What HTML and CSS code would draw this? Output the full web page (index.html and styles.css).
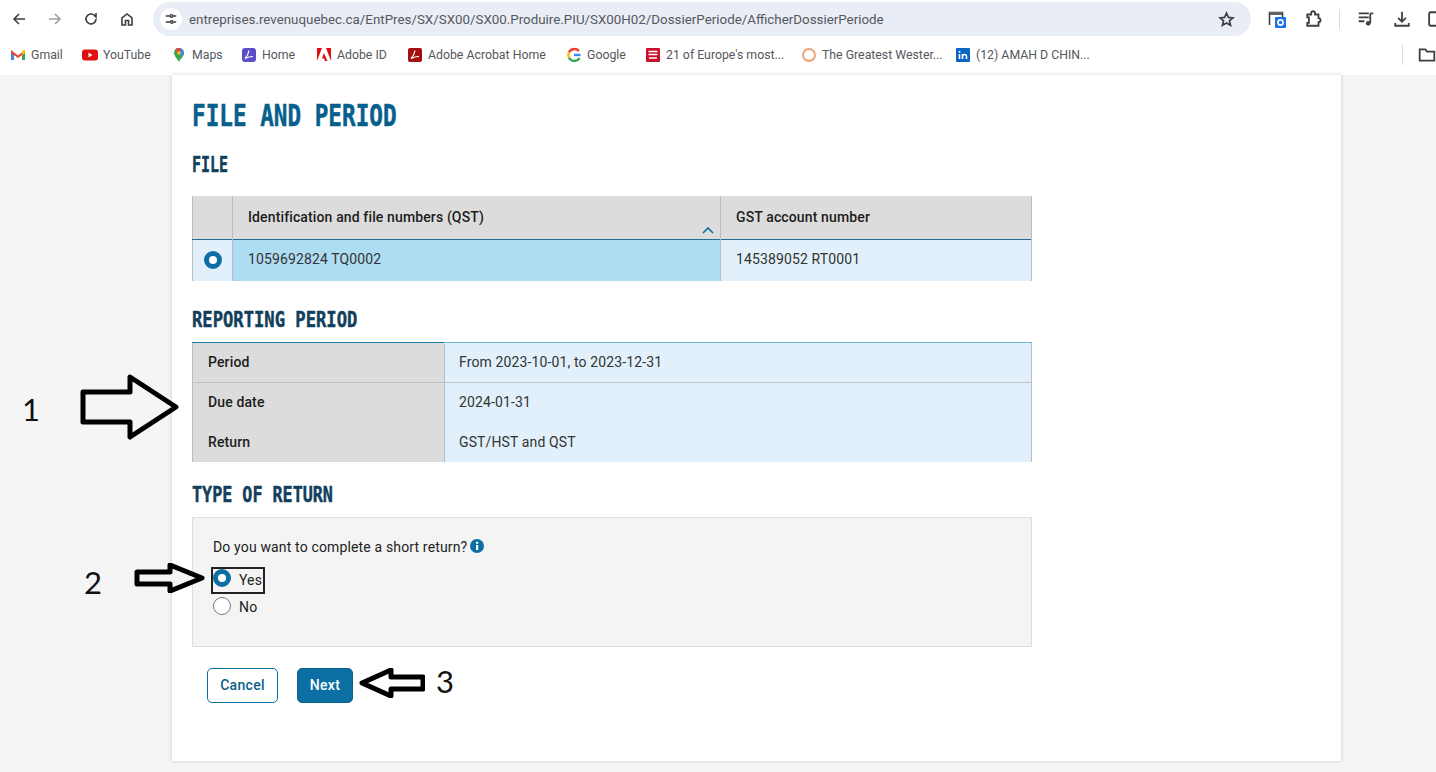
FILE: index.html
```html
<!DOCTYPE html>
<html lang="en">
<head>
<meta charset="utf-8">
<title>File and period</title>
<link rel="stylesheet" href="styles.css">
</head>
<body>
<header class="toolbar">
  <svg class="tb-icon first" viewBox="0 0 16 16"><path d="M14 8H3M8 3 3 8l5 5" class="st dark"/></svg>
  <svg class="tb-icon muted" viewBox="0 0 16 16"><path d="M2 8h11M8 3l5 5-5 5" class="st grey"/></svg>
  <svg class="tb-icon" viewBox="0 0 16 16"><path d="M13 8a5 5 0 1 1-1.500-3.600L13 6V2" class="st dark"/></svg>
  <svg class="tb-icon" viewBox="0 0 16 16"><path d="M3 14V7l5-4 5 4v7h-3.500V9.500h-3V14z" class="st dark"/></svg>
  <div class="omnibox">
    <span class="tune"><svg viewBox="0 0 16 16"><path d="M2 4.500h5M11 11.500h3M2 11.500h5M10 4.500h4" class="st dark"/><circle cx="8.500" cy="4.500" r="1.500" class="st dark"/><circle cx="9" cy="11.500" r="1.500" class="st dark"/></svg></span>
    <span class="url">entreprises.revenuquebec.ca/EntPres/SX/SX00/SX00.Produire.PIU/SX00H02/DossierPeriode/AfficherDossierPeriode</span>
    <svg class="star" viewBox="0 0 16 16"><path d="m8 2 1.800 4 4.200.4-3.200 2.800 1 4.300L8 11.200 4.200 13.500l1-4.300L2 6.400 6.200 6z" class="st dark"/></svg>
  </div>
  <svg class="ext camera" viewBox="0 0 18 18"><path d="M1.500 15V2.500h13V8" class="st dark"/><path d="M1.500 2h13v3h-13z" fill="#5f6368"/><rect x="7" y="7" width="11" height="11" rx="1" fill="#1a73e8"/><circle cx="12.500" cy="12.500" r="2.600" fill="none" stroke="#fff" stroke-width="1.600"/></svg>
  <svg class="ext puzzle" viewBox="0 0 16 16"><path d="M2 4h3.500V2.800a1.700 1.700 0 0 1 3.400 0V4H12v3.200a1.800 1.800 0 0 1 0 3.600V14H2v-2.500h1.500V6.500H2z" class="st dark"/></svg>
  <span class="divider"></span>
  <svg class="ext queue" viewBox="0 0 16 16"><path d="M1.500 3h9M1.500 6.500h9M1.500 10h5" class="st dark"/><path d="M11.800 3h2.700M11.800 3v8.500" class="st dark"/><circle cx="10" cy="11.800" r="2.100" fill="#3c4043"/></svg>
  <svg class="ext download" viewBox="0 0 16 16"><path d="M8 1.500v9M4.500 7 8 10.500 11.500 7M2 11.500v2.500h12v-2.500" class="st dark"/></svg>
  <svg class="ext cut" viewBox="0 0 16 16"><rect x="1" y="2" width="14" height="12" rx="1.500" class="st dark"/></svg>
</header>

<nav class="bookmarks">
  <span class="bm gmail"><svg viewBox="0 0 16 16"><path d="M1 3v10h3V7z" fill="#4285f4"/><path d="M15 3v10h-3V7z" fill="#34a853"/><path d="M1 3l7 5.500L15 3v3L8 11 1 6z" fill="#ea4335"/><path d="M15 3v3l-3 2.300V3.800z" fill="#fbbc04"/></svg>Gmail</span>
  <span class="bm yt"><svg viewBox="0 0 16 16"><rect y="2.500" width="16" height="11" rx="3" fill="#e01010"/><path d="m6.500 5.500 4 2.500-4 2.500z" fill="#fff"/></svg>YouTube</span>
  <span class="bm maps"><svg viewBox="0 0 16 16"><path d="M8 1a5 5 0 0 1 5 5c0 3-3 5-5 9-2-4-5-6-5-9a5 5 0 0 1 5-5z" fill="#34a853"/><path d="M4 2.500 12 9c.6-1 1-2 1-3a5 5 0 0 0-5-5 5 5 0 0 0-4 1.500z" fill="#4285f4"/><path d="M8 1a5 5 0 0 0-4 1.500L7 6l3-3.500A5 5 0 0 0 8 1z" fill="#ea4335"/><circle cx="8" cy="6" r="1.800" fill="#fbbc04"/></svg>Maps</span>
  <span class="bm home"><svg viewBox="0 0 16 16"><rect x="1" y="1" width="14" height="14" rx="3" fill="#5a4fc9"/><path d="M8 3.500c-.5 3-2 6-4 8 3-1.500 5.500-2 8-2" fill="none" stroke="#fff" stroke-width="1.200"/></svg>Home</span>
  <span class="bm adobe"><svg viewBox="0 0 16 16"><path d="M1 1h5L1 14zM15 1h-5l5 13zM8 6l3.500 8H9L8 11.500H6z" fill="#e01010"/></svg>Adobe ID</span>
  <span class="bm acro"><svg viewBox="0 0 16 16"><rect x="1" y="1" width="14" height="14" rx="2" fill="#a50f0f"/><path d="M8 3.500c-.5 3-2 6-4 8 3-1.500 5.500-2 8-2" fill="none" stroke="#fff" stroke-width="1.200"/></svg>Adobe Acrobat Home</span>
  <span class="bm goog"><svg viewBox="0 0 16 16"><path d="M14.500 8H8" fill="none" stroke="#4285f4" stroke-width="2.400"/><path d="M13 4a6 6 0 0 0-4.500-2A6 6 0 0 0 3 5.200" fill="none" stroke="#ea4335" stroke-width="2.400"/><path d="M3 5.200a6 6 0 0 0 0 5.600" fill="none" stroke="#fbbc04" stroke-width="2.400"/><path d="M3 10.800A6 6 0 0 0 13.500 11" fill="none" stroke="#34a853" stroke-width="2.400"/></svg>Google</span>
  <span class="bm cnn"><svg viewBox="0 0 16 16"><rect x="1" y="1" width="14" height="14" rx="1" fill="#c8102e"/><path d="M3.500 4.500h9M3.500 7.500h9M4 11h8" stroke="#fff" stroke-width="1.600"/></svg>21 of Europe's most...</span>
  <span class="bm west"><svg viewBox="0 0 16 16"><circle cx="8" cy="8" r="6" fill="none" stroke="#eda06f" stroke-width="1.800"/></svg>The Greatest Wester...</span>
  <span class="bm li"><svg viewBox="0 0 16 16"><rect x="1" y="1" width="14" height="14" rx="1" fill="#0a66c2"/><path d="M4.500 7v5M7.500 12V7M7.500 9.500c0-2.500 4-3 4 0V12" fill="none" stroke="#fff" stroke-width="1.600"/><circle cx="4.500" cy="4.700" r="1" fill="#fff"/></svg>(12) AMAH D CHIN...</span>
  <span class="bm-end"><span class="divider"></span><svg class="folder" viewBox="0 0 16 16"><path d="M1.500 13V3h5l1.500 2h6.500v8z" class="st dark"/></svg></span>
</nav>

<main class="page">
  <div class="card">
    <h1 class="title">FILE AND PERIOD</h1>

    <h2 class="sub sub-file">FILE</h2>
    <table class="data file-table">
      <thead>
        <tr>
          <th class="c-radio"></th>
          <th class="c-id">Identification and file numbers (QST)
            <svg class="sort" viewBox="0 0 12 7"><path d="M1 6l5-5 5 5" fill="none" stroke="#0b6fa4" stroke-width="1.600"/></svg>
          </th>
          <th>GST account number</th>
        </tr>
      </thead>
      <tbody>
        <tr>
          <td class="c-radio"><span class="radio on"></span></td>
          <td class="selected">1059692824 TQ0002</td>
          <td>145389052 RT0001</td>
        </tr>
      </tbody>
    </table>

    <h2 class="sub sub-period">REPORTING PERIOD</h2>
    <table class="data period-table">
      <tbody>
        <tr class="line"><th>Period</th><td>From 2023-10-01, to 2023-12-31</td></tr>
        <tr><th>Due date</th><td>2024-01-31</td></tr>
        <tr class="last"><th>Return</th><td>GST/HST and QST</td></tr>
      </tbody>
    </table>

    <h2 class="sub sub-type">TYPE OF RETURN</h2>
    <section class="panel">
      <p class="question">Do you want to complete a short return?
        <svg class="info" viewBox="0 0 14 14"><circle cx="7" cy="7" r="7" fill="#0b6fa4"/><rect x="6" y="6" width="2.200" height="5" fill="#fff"/><rect x="6" y="2.800" width="2.200" height="2" fill="#fff"/></svg>
      </p>
      <div class="option focus"><span class="radio on"></span><span>Yes</span></div>
      <div class="option no"><span class="radio"></span><span>No</span></div>
    </section>

    <div class="actions">
      <button class="btn ghost">Cancel</button>
      <button class="btn solid">Next</button>
    </div>
  </div>

  <span class="num n1">1</span>
  <svg class="arrow a1" viewBox="0 0 100 66"><path d="M3 18h47V3l46 30-46 30V48H3z" class="ar"/></svg>
  <span class="num n2">2</span>
  <svg class="arrow a2" viewBox="0 0 70 30"><path d="M2 9h33V2l32 13-32 13v-7H2z" class="ar"/></svg>
  <span class="num n3">3</span>
  <svg class="arrow a3" viewBox="0 0 66 30"><path d="M64 9H32V2L3 15l29 13v-7h32z" class="ar"/></svg>
</main>
</body>
</html>
```
FILE: styles.css
```css
* { box-sizing: border-box; }
html, body { margin: 0; height: 100%; overflow: hidden; }
body {
  width: 1436px; height: 772px; display: flex; flex-direction: column;
  background: #f5f5f5; color: #222;
  font-family: Roboto, "Liberation Sans", sans-serif;
}
.st { fill: none; stroke-width: 1.600; }
.dark { stroke: #3c4043; }
.grey { stroke: #9aa0a6; }

.toolbar {
  height: 38px; flex: none; background: #fff; overflow: hidden;
  display: flex; align-items: center; padding-left: 11px;
}
.tb-icon { width: 16px; height: 16px; margin-right: 20px; flex: none; }
.omnibox {
  width: 1098px; height: 34px; margin-left: -2px; margin-right: 17px; flex: none;
  background: #e9edf6; border-radius: 17px;
  display: flex; align-items: center; padding: 0 16px 0 7px;
}
.tune {
  width: 22px; height: 22px; border-radius: 50%; background: #fff;
  display: flex; align-items: center; justify-content: center;
}
.tune svg { width: 14px; height: 14px; }
.url { flex: 1; font-size: 13.350px; color: #55585d; margin-left: 7px; white-space: nowrap; overflow: hidden; }
.star { width: 17px; height: 17px; }
.ext { width: 18px; height: 18px; flex: none; }
.puzzle { margin-left: 19px; }
.queue { margin: 0; }
.download { margin-left: 18px; }
.cut { margin-left: 17px; }
.divider { width: 1px; height: 20px; background: #d5dbe6; flex: none; margin: 0 17px 0 16px; }

.bookmarks {
  height: 37px; flex: none; background: #fff; display: flex; align-items: center;
  padding-left: 10px; font-size: 12.300px; color: #54575c; white-space: nowrap; padding-bottom: 3px;
}
.bm { display: flex; align-items: center; gap: 5px; flex: none; }
.bm svg { width: 16px; height: 16px; flex: none; }
.gmail { width: 72px; }
.yt { width: 89px; }
.maps { width: 70px; }
.home { width: 75px; }
.adobe { width: 91px; }
.acro { width: 159px; }
.goog { width: 79px; }
.cnn { width: 156px; }
.west { width: 154px; }
.li { width: 200px; }
.bm-end { margin-left: auto; display: flex; align-items: center; }
.bm-end .divider { margin: 0 15px 0 0; }
.folder { width: 18px; height: 18px; }

.page { position: relative; flex: 1; min-height: 0; padding: 0 95px 11px 172px; }
.card {
  height: 100%; background: #fff; padding: 27px 0 0 20px;
  box-shadow: 0 0 4px rgba(0, 0, 0, .18);
}
.title, .sub {
  margin: 0; font-family: "DejaVu Sans Mono", "Liberation Mono", monospace;
  font-weight: 700; white-space: nowrap; transform-origin: left center;
  -webkit-text-stroke: .5px currentColor;
}
.title { font-size: 30px; line-height: 28px; color: #07608c; transform: scaleX(.755); }
.sub { font-size: 22px; line-height: 22px; color: #123f5c; transform: scaleX(.78); }
.sub-file { margin-top: 24px; transform: scaleX(.68); }
.sub-period { margin-top: 28px; }
.sub-type { margin-top: 22px; transform: scaleX(.76); }

.data {
  width: 840px; border-collapse: collapse; table-layout: fixed; font-size: 14px; letter-spacing: .13px;
  border-left: 1px solid #b9bec2; border-right: 1px solid #b9bec2;
}
.data th { font-weight: 500; text-align: left; background: #dcdcdc; color: #1c1c1c; }
.data td { background: #e1f0fa; color: #333; }
.file-table { margin-top: 20px; }
.file-table th, .file-table td { padding: 0 0 0 15px; border-right: 1px solid #b9bec2; }
.file-table thead tr { height: 43px; border-bottom: 1px solid #1f6f98; }
.file-table tbody tr { height: 42px; }
.file-table tbody td { padding-bottom: 2px; }
.file-table .c-radio { width: 40px; padding: 0; text-align: center; }
.file-table tbody .c-radio { padding: 0; }
.file-table .c-id { width: 488px; position: relative; }
.file-table td.selected { background: #aedcf3; }
.sort { position: absolute; right: 6px; bottom: 5px; width: 12px; height: 7px; }
.period-table { margin-top: 11px; }
.period-table tr { height: 40px; }
.period-table tr.last { height: 39px; }
.period-table tr.line { border-bottom: 1px solid #bcc1c4; }
.period-table th { width: 252px; padding: 0 0 2px 15px; border-right: 1px solid #b9bec2; }
.period-table td { padding: 0 0 2px 14px; }
.period-table tr.line th { border-top: 1px solid #1f7ba8; }
.period-table tr.line td { border-top: 1px solid #6bb5d5; }
.period-table tr.last th, .period-table tr.last td { padding-bottom: 0; }

.radio {
  display: inline-block; width: 18px; height: 18px; border-radius: 50%; flex: none;
  background: #fff; border: 1px solid #777; vertical-align: middle;
}
.radio.on { border: 5px solid #0b6fa4; }

.panel {
  width: 840px; height: 130px; margin-top: 11px; padding: 20px 20px 0;
  background: #f4f4f4; border: 1px solid #dedede; font-size: 14px; letter-spacing: .15px; color: #222;
}
.question { margin: 0; line-height: 18px; display: flex; align-items: center; gap: 3px; }
.info { width: 14px; height: 14px; margin-bottom: 1px; }
.option { display: flex; align-items: center; gap: 8px; width: 54px; }
.option.focus { height: 27px; margin-top: 11px; margin-left: -2px; padding-left: 0; border: 2px solid #222; }
.option.focus .radio { margin-bottom: 4px; }
.option.no { height: 26px; }
.option.no .radio { margin-bottom: 2px; }

.actions { display: flex; gap: 19px; margin: 21px 0 0 15px; }
.btn {
  height: 35px; border-radius: 5px; font: 500 14px Roboto, "Liberation Sans", sans-serif;
  letter-spacing: .3px; padding: 0;
}
.ghost { width: 71px; background: #fff; color: #0b5f86; border: 1px solid #0b6fa4; }
.solid { width: 56px; background: #0b6fa4; color: #fff; border: 1px solid #0a628f; }

.num { position: absolute; font: 400 31px/34px Lato, "Open Sans", sans-serif; color: #111; }
.n1 { left: 22px; top: 317px; }
.n2 { left: 84px; top: 490px; }
.n3 { left: 436px; top: 589px; }
.arrow { position: absolute; }
.ar { fill: #fff; stroke: #000; stroke-width: 5; stroke-linejoin: round; }
.a1 { left: 80px; top: 299px; width: 100px; height: 66px; }
.a1 .ar { fill: #f5f5f5; }
.a2 { left: 134px; top: 488px; width: 72px; height: 30px; }
.a2 .ar { fill: #f5f5f5; }
.a3 { left: 359px; top: 593px; width: 66px; height: 30px; }
```
